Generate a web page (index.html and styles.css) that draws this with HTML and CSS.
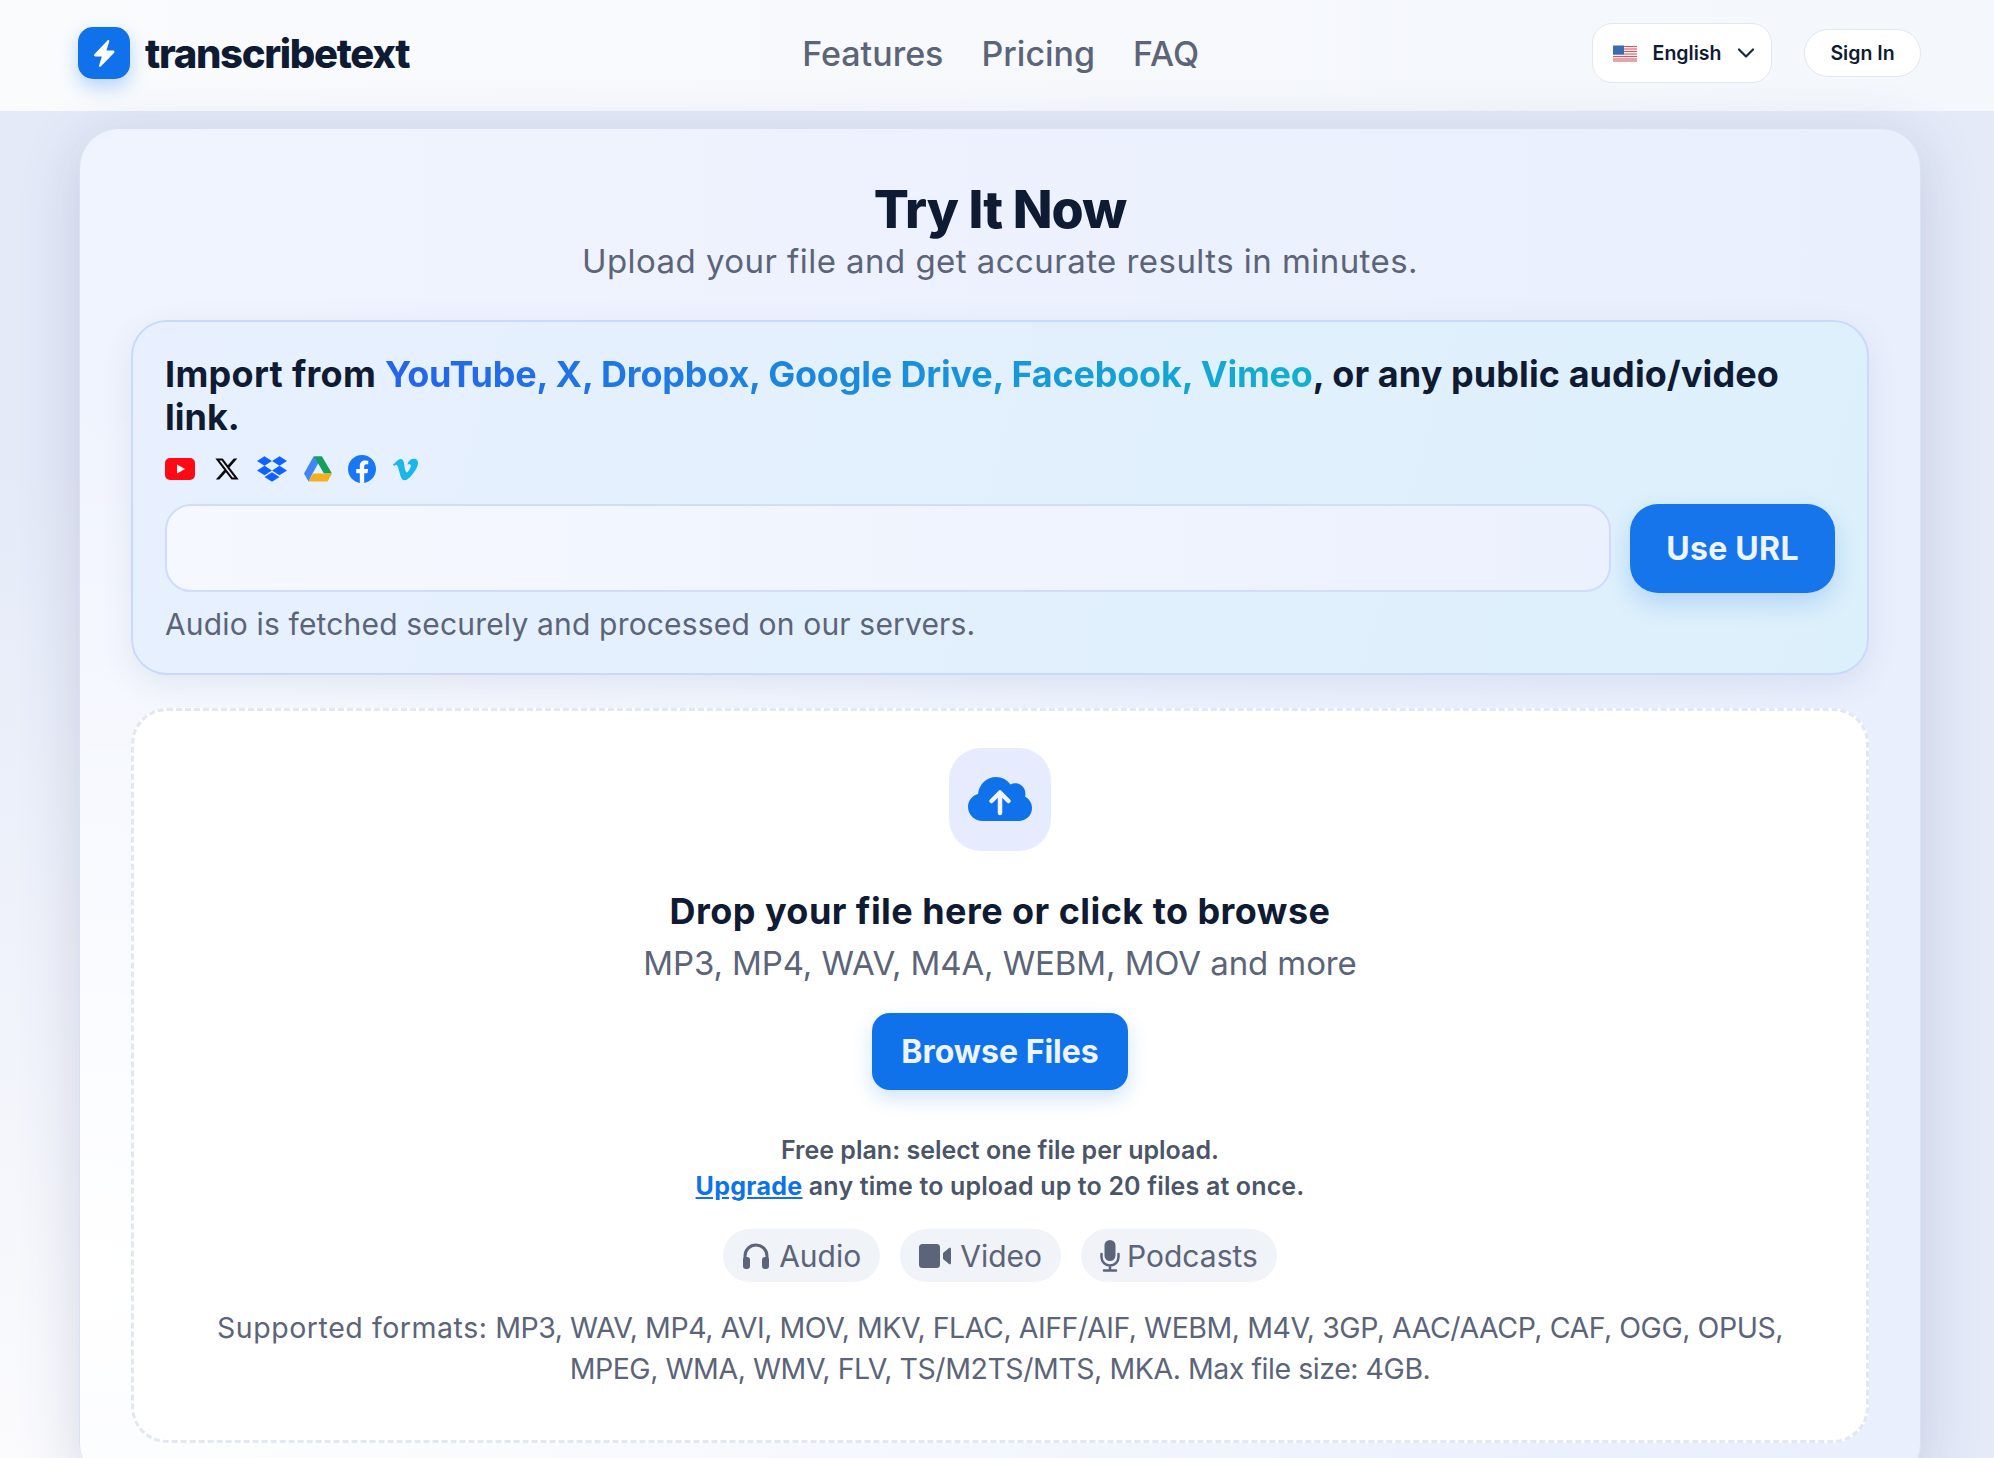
FILE: index.html
```html
<!DOCTYPE html>
<html lang="en">
<head>
    <meta charset="UTF-8">
    <title>transcribetext</title>
    <link rel="stylesheet" href="styles.css">
</head>
<body>
    <header class="topbar">
        <a class="brand" href="#">
            <span class="brand-mark">
                <svg viewBox="0 0 24 24" width="29" height="29"><path d="M14.5 1.2c.7-.7 1.7 0 1.4.9L13.6 9.6h5.7c.9 0 1.3 1 .7 1.7L8.9 22.8c-.7.7-1.7 0-1.4-.9l2.3-7.5H4.3c-.9 0-1.3-1-.7-1.7z" fill="#fff"/></svg>
            </span>
            <span class="brand-name">transcribetext</span>
        </a>
        <nav class="mainnav">
            <a href="#">Features</a>
            <a href="#">Pricing</a>
            <a href="#">FAQ</a>
        </nav>
        <div class="top-actions">
            <button class="lang-btn" type="button">
                <svg class="flag" viewBox="0 0 24 16" width="24" height="17">
                    <rect width="24" height="16" fill="#f4f1f1"/>
                    <path d="M0 1h24M0 3.500h24M0 6h24M0 8.500h24M0 11h24M0 13.500h24M0 15.500h24" stroke="#d9545f" stroke-width="1.200"/>
                    <rect width="11" height="9" fill="#3a6db0"/>
                </svg>
                <span>English</span>
                <svg viewBox="0 0 18 12" width="18" height="12"><path d="M2 2.500l7 7 7-7" fill="none" stroke="#1e293b" stroke-width="2.200" stroke-linecap="round" stroke-linejoin="round"/></svg>
            </button>
            <a class="signin-btn" href="#">Sign In</a>
        </div>
    </header>

    <main class="page">
        <section class="try-card">
            <h1>Try It Now</h1>
            <p class="lead">Upload your file and get accurate results in minutes.</p>

            <div class="import-box">
                <h2><span class="import-lead">Import from </span><span class="grad-text">YouTube, X, Dropbox, Google Drive, Facebook, Vimeo</span><span class="import-rest">, or any public audio/video </span><span>link.</span></h2>
                <div class="service-icons">
                    <svg viewBox="0 0 30 22" width="30" height="22"><rect width="30" height="22" rx="5" fill="#ff0a14"/><path d="M12 6.500l8 4.500-8 4.500z" fill="#fff"/></svg>
                    <svg class="svc-x" viewBox="0 0 24 24" width="26" height="26"><path d="M18.244 2.25h3.308l-7.227 8.26 8.502 11.24H16.17l-5.214-6.817L4.99 21.75H1.68l7.73-8.835L1.254 2.25H8.08l4.713 6.231zm-1.161 17.52h1.833L7.084 4.126H5.117z" fill="#0b0b0b"/></svg>
                    <svg viewBox="0 0 24 24" width="30" height="30"><path d="M6 1.807L0 5.629l6 3.822 6.001-3.822L6 1.807zM18 1.807l-6 3.822 6 3.822 6-3.822-6-3.822zM0 13.274l6 3.822 6.001-3.822L6 9.452l-6 3.822zM18 9.452l-6 3.822 6 3.822 6-3.822-6-3.822zM6 18.371l6.001 3.822 6-3.822-6-3.822L6 18.371z" fill="#0f62fe"/></svg>
                    <svg viewBox="0 0 28 26" width="28" height="26"><path d="M9.500 0h8.500l-9.500 17L4.500 25 0 17z" fill="#4285f4" transform="translate(0 .5)"/><path d="M10 0h8l10 17h-8z" fill="#12a05c" transform="translate(0 .5)"/><path d="M9 17.500h19l-4.500 8H4.500z" fill="#f2b01e"/></svg>
                    <svg class="svc-fb" viewBox="0 0 24 24" width="28" height="28"><circle cx="12" cy="12" r="11" fill="#fff"/><path d="M24 12.073c0-6.627-5.373-12-12-12s-12 5.373-12 12c0 5.990 4.388 10.954 10.125 11.854v-8.385H7.078v-3.470h3.047V9.430c0-3.007 1.792-4.669 4.533-4.669 1.312 0 2.686.235 2.686.235v2.953H15.830c-1.491 0-1.956.925-1.956 1.874v2.250h3.328l-.532 3.470h-2.796v8.385C19.612 23.027 24 18.062 24 12.073z" fill="#1877f2"/></svg>
                    <svg viewBox="0 0 24 24" width="25" height="25"><path d="M23.977 6.416c-.105 2.338-1.739 5.543-4.894 9.609-3.268 4.247-6.026 6.370-8.290 6.370-1.409 0-2.578-1.294-3.553-3.881L5.322 11.400C4.603 8.816 3.834 7.522 3.010 7.522c-.179 0-.806.378-1.881 1.132L0 7.197c1.185-1.044 2.351-2.084 3.501-3.128C5.080 2.701 6.266 1.984 7.055 1.910c1.867-.180 3.016 1.100 3.447 3.838.465 2.953.789 4.789.971 5.507.539 2.450 1.131 3.674 1.776 3.674.502 0 1.256-.796 2.265-2.385 1.004-1.589 1.540-2.797 1.612-3.628.144-1.371-.395-2.061-1.614-2.061-.574 0-1.167.121-1.777.391 1.186-3.868 3.434-5.757 6.762-5.637 2.473.060 3.628 1.664 3.493 4.797z" fill="#1ab7ea"/></svg>
                </div>
                <div class="url-row">
                    <input class="url-input" type="text">
                    <button class="url-btn" type="button">Use URL</button>
                </div>
                <p class="import-note">Audio is fetched securely and processed on our servers.</p>
            </div>

            <div class="drop-zone">
                <div class="drop-icon">
                    <svg viewBox="0 0 64 48" width="64" height="48">
                        <path d="M15 45C6.700 45 0 38.800 0 31c0-6.300 4.200-11.300 10-13C11 8 19 1 28 1c6 0 11.500 3 14.500 7.500 1.500-.8 3-1.200 4.500-1.200 5.800 0 10.200 4.400 10.400 10 .1 1.300-.1 2.400-.4 3.300C61 22.800 64 27 64 32c0 7.500-6 13-13.500 13z" fill="#0f72ea"/>
                        <path d="M32 37V17M23.500 25l8.500-8.500 8.500 8.500" fill="none" stroke="#f1f4fe" stroke-width="4.500" stroke-linecap="round" stroke-linejoin="round"/>
                    </svg>
                </div>
                <h3>Drop your file here or click to browse</h3>
                <p class="drop-sub">MP3, MP4, WAV, M4A, WEBM, MOV and more</p>
                <button class="browse-btn" type="button">Browse Files</button>
                <p class="plan-note">Free plan: select one file per upload.<br><a href="#">Upgrade</a> <span class="plan-rest">any time to upload up to 20 files at once.</span></p>
                <div class="pills">
                    <span class="pill">
                        <svg viewBox="0 0 28 28" width="28" height="28"><path d="M3 19v-5C3 7.500 8 3 14 3s11 4.500 11 11v5" fill="none" stroke="#5b6478" stroke-width="3"/><rect x="1" y="15" width="7" height="12" rx="3" fill="#5b6478"/><rect x="20" y="15" width="7" height="12" rx="3" fill="#5b6478"/></svg>
                        Audio
                    </span>
                    <span class="pill">
                        <svg viewBox="0 0 32 24" width="32" height="24"><rect width="21" height="24" y="0" rx="3.500" fill="#5b6478"/><path d="M24 9l6-5c.8-.6 2-.1 2 1v14c0 1.100-1.200 1.600-2 1l-6-5z" fill="#5b6478"/></svg>
                        Video
                    </span>
                    <span class="pill pill-narrow">
                        <svg viewBox="0 0 20 32" width="20" height="32"><rect x="4.500" width="11" height="21" rx="5.500" fill="#5b6478"/><path d="M1.500 14v3c0 4.700 3.800 8.500 8.500 8.500s8.500-3.800 8.500-8.500v-3M10 25.500V30M4 30.500h12" fill="none" stroke="#5b6478" stroke-width="2.500" stroke-linecap="round"/></svg>
                        Podcasts
                    </span>
                </div>
                <p class="formats"><span class="formats-lead">Supported formats:</span> MP3, WAV, MP4, AVI, MOV, MKV, FLAC, AIFF/AIF, WEBM, M4V, 3GP, AAC/AACP, CAF, OGG, OPUS, MPEG, WMA, WMV, FLV, TS/M2TS/MTS, MKA. Max file size: 4GB.</p>
            </div>
        </section>
    </main>
</body>
</html>
```

FILE: styles.css
```css
*{
    margin: 0;
    padding: 0;
    box-sizing: border-box;
}
html, body{
    height: 100%;
    overflow: hidden;
}
body{
    font-family: Inter, "Liberation Sans", sans-serif;
    color: #0f1a33;
    background: radial-gradient(ellipse 1300px 1000px at 0% 100%, #fbfbfd 0%, rgba(251, 251, 253, 0) 100%), #e4eaf8;
}
a{
    text-decoration: none;
    color: inherit;
}
button{
    font-family: inherit;
    border: 0;
}

/* top bar */
.topbar{
    height: 111px;
    padding: 0 73px 5px 78px;
    display: flex;
    align-items: center;
    justify-content: space-between;
    background: linear-gradient(90deg, #f9fbfd, #f4f7fc);
}
.brand{
    display: flex;
    align-items: center;
    gap: 15px;
}
.brand-mark{
    width: 52px;
    height: 52px;
    border-radius: 15px;
    background: #0f72ea;
    box-shadow: 0 8px 18px rgba(15, 114, 234, .28);
    display: flex;
    align-items: center;
    justify-content: center;
}
.brand-name{
    font-size: 40px;
    font-weight: 800;
    letter-spacing: -1.3px;
    color: #0f1a33;
}
.mainnav{
    display: flex;
    gap: 38px;
    font-size: 34px;
    font-weight: 500;
    color: #5b6478;
}
.top-actions{
    display: flex;
    align-items: center;
    gap: 32px;
}
.lang-btn{
    width: 180px;
    height: 60px;
    padding-left: 4px;
    border: 1px solid #e2e8f0;
    border-radius: 20px;
    background: #fff;
    display: flex;
    align-items: center;
    justify-content: center;
    gap: 16px;
    font-size: 19.5px;
    font-weight: 600;
    color: #0f1a33;
}
.signin-btn{
    width: 117px;
    height: 48px;
    border: 1px solid #e2e8f0;
    border-radius: 24px;
    background: #fff;
    display: flex;
    align-items: center;
    justify-content: center;
    font-size: 19.5px;
    font-weight: 600;
}

/* main card */
.page{
    padding: 17px 73px 0 79px;
}
.try-card{
    border: 1px solid #d9e2f5;
    border-radius: 40px;
    padding: 50px 51px 40px;
    background: radial-gradient(ellipse 1500px 900px at 0% 85%, #ffffff 0%, rgba(255, 255, 255, 0) 100%), linear-gradient(90deg, #f0f4fe, #e9effd);
    box-shadow: 0 10px 60px rgba(70, 85, 130, .2);
    text-align: center;
}
.try-card h1{
    font-size: 52px;
    font-weight: 800;
    line-height: 62px;
    letter-spacing: -.9px;
    color: #0f1a33;
}
.lead{
    font-size: 33px;
    line-height: 40px;
    color: #5b6478;
    letter-spacing: .45px;
}

/* import box */
.import-box{
    margin-top: 39px;
    border: 2px solid #c8dafb;
    border-radius: 36px;
    padding: 31px 32px 30px;
    text-align: left;
    background: linear-gradient(105deg, #e8f0ff, #dcf0fb);
    box-shadow: 0 10px 32px rgba(70, 85, 130, .1);
}
.import-box h2{
    font-size: 36px;
    font-weight: 700;
    line-height: 43px;
    color: #0f1a33;
}
.import-lead{
    letter-spacing: .3px;
}
.import-rest{
    letter-spacing: .08px;
}
.grad-text{
    letter-spacing: -.2px;
    background: linear-gradient(90deg, #2563eb, #12b0d0);
    -webkit-background-clip: text;
    background-clip: text;
    color: transparent;
}
.service-icons{
    margin-top: 15px;
    height: 30px;
    display: flex;
    align-items: center;
    gap: 17px;
}
.svc-x{
    margin-left: 2px;
}
.svc-fb{
    margin-left: -1px;
}
.url-row{
    margin-top: 20px;
    display: flex;
    gap: 19px;
}
.url-input{
    flex: 1;
    height: 88px;
    border: 2px solid #cfdcfa;
    border-radius: 26px;
    background: linear-gradient(90deg, #f5f8fe, #ecf1fe);
}
.url-btn{
    width: 205px;
    height: 89px;
    border-radius: 28px;
    background: #1675eb;
    color: #eef4fe;
    font-size: 32px;
    font-weight: 700;
    letter-spacing: .3px;
    box-shadow: 0 10px 24px rgba(22, 117, 235, .22);
}
.import-note{
    margin-top: 12px;
    font-size: 30px;
    line-height: 38px;
    letter-spacing: .17px;
    color: #5b6478;
}

/* drop zone */
.drop-zone{
    margin-top: 33px;
    height: 735px;
    border: 3px dashed #e2e8f2;
    border-radius: 36px;
    background: #fff;
    padding-top: 37px;
    display: flex;
    flex-direction: column;
    align-items: center;
}
.drop-icon{
    width: 102px;
    height: 103px;
    border-radius: 32px;
    background: #e6ebfe;
    display: flex;
    align-items: center;
    justify-content: center;
}
.drop-zone h3{
    margin-top: 37px;
    font-size: 36px;
    font-weight: 700;
    line-height: 46px;
    letter-spacing: .45px;
    color: #0f1a33;
}
.drop-sub{
    margin-top: 6px;
    font-size: 33px;
    line-height: 46px;
    letter-spacing: -.1px;
    color: #5b6478;
}
.browse-btn{
    margin-top: 27px;
    width: 256px;
    height: 77px;
    border-radius: 18px;
    background: #0f72ea;
    color: #eef4fe;
    font-size: 32px;
    font-weight: 700;
    box-shadow: 0 8px 20px rgba(15, 114, 234, .2);
}
.plan-note{
    margin-top: 42px;
    font-size: 25px;
    font-weight: 600;
    line-height: 36px;
    color: #4b5568;
}
.plan-note a{
    color: #0f72ea;
    text-decoration: underline;
    font-weight: 700;
    letter-spacing: .3px;
}
.plan-rest{
    letter-spacing: .15px;
}
.pills{
    margin-top: 25px;
    display: flex;
    gap: 20px;
}
.pill{
    height: 53px;
    padding: 0 19px;
    border-radius: 27px;
    background: #f0f3f8;
    display: flex;
    align-items: center;
    gap: 9px;
    font-size: 30px;
    color: #5b6478;
}
.pill-narrow{
    gap: 7px;
}
.formats{
    margin-top: 25px;
    width: 1600px;
    font-size: 28.5px;
    line-height: 41px;
    letter-spacing: -.45px;
    color: #5b6478;
    text-align: center;
}
.formats-lead{
    letter-spacing: .55px;
}
```
